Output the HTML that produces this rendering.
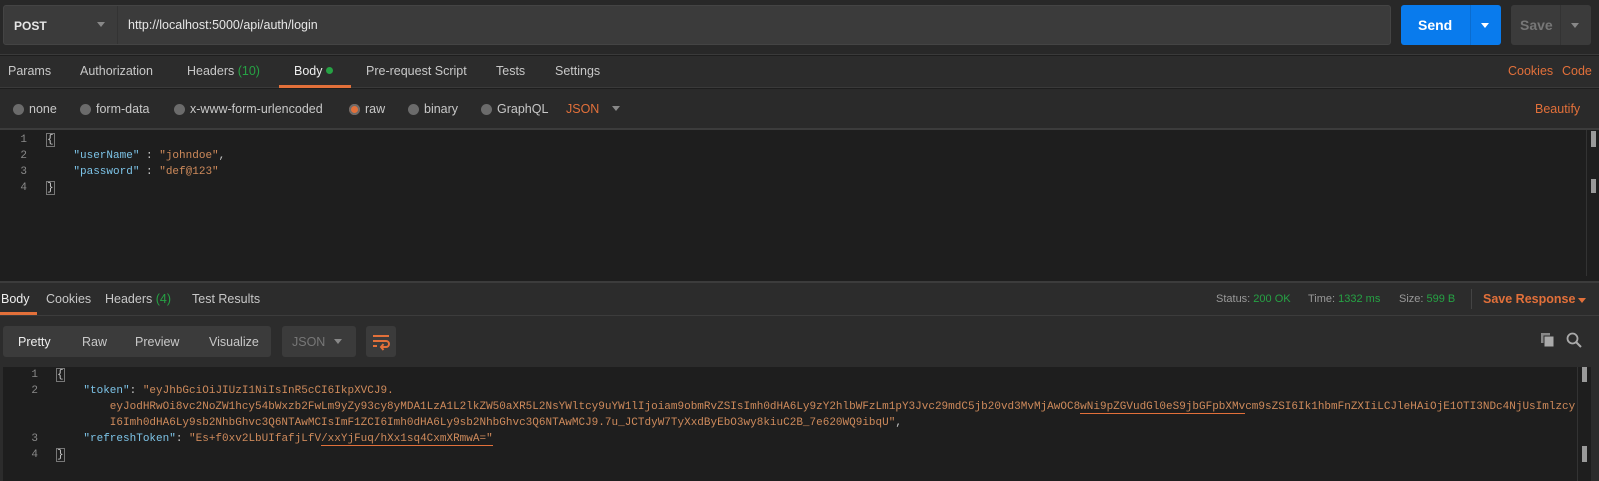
<!DOCTYPE html>
<html><head><meta charset="utf-8"><style>
*{box-sizing:border-box;margin:0;padding:0}
html,body{width:1599px;height:481px}
body{background:#1e1e1e;font-family:"Liberation Sans",sans-serif;font-size:12.5px;color:#c8c8c8;position:relative;overflow:hidden}
.a{position:absolute;white-space:nowrap}
.mono{font-family:"Liberation Mono",monospace;font-size:11px;white-space:nowrap}
.or{color:#e2703a}.gr{color:#26a244}
.dot{display:inline-block;width:11px;height:11px;border-radius:50%;background:#6b6b6b;vertical-align:-2px;margin-right:5px}
.ln{color:#8a8a8a;width:30px;text-align:right}
.k{color:#7dc4e8}.s{color:#ce8a5b}
</style></head><body>
<div class="a" style="left:0;top:0;width:1599px;height:55px;background:#282828;border-bottom:1px solid #3a3a3a"></div>
<div class="a" style="left:3px;top:5px;width:1388px;height:40px;background:#3b3b3b;border-radius:3px;border:1px solid #444"></div>
<div class="a" style="left:117px;top:6px;width:1px;height:38px;background:#333"></div>
<div class="a" style="left:14px;top:19px;font-weight:bold;color:#e6e6e6;font-size:12px">POST</div>
<div class="a" style="left:97px;top:22px;width:0;height:0;border-left:4px solid transparent;border-right:4px solid transparent;border-top:5px solid #888"></div>
<div class="a" style="left:128px;top:18px;color:#e6e6e6;font-size:12.5px">http://localhost:5000/api/auth/login</div>
<div class="a" style="left:1401px;top:5px;width:100px;height:40px;background:#097bed;border-radius:3px"></div>
<div class="a" style="left:1470px;top:5px;width:1px;height:40px;background:#0a6ccf"></div>
<div class="a" style="left:1418px;top:17px;color:#fff;font-weight:bold;font-size:14px">Send</div>
<div class="a" style="left:1481px;top:23px;border-left:4px solid transparent;border-right:4px solid transparent;border-top:5px solid #fff"></div>
<div class="a" style="left:1511px;top:5px;width:80px;height:40px;background:#3b3b3b;border-radius:3px"></div>
<div class="a" style="left:1560px;top:5px;width:1px;height:40px;background:#333"></div>
<div class="a" style="left:1520px;top:17px;color:#777;font-weight:bold;font-size:14px">Save</div>
<div class="a" style="left:1571px;top:23px;border-left:4px solid transparent;border-right:4px solid transparent;border-top:5px solid #888"></div>
<!-- tabs -->
<div class="a" style="left:0;top:56px;width:1599px;height:32px;background:#2c2c2c;border-bottom:1px solid #3a3a3a"></div>
<div class="a" style="top:64px;left:8px">Params</div>
<div class="a" style="top:64px;left:80px">Authorization</div>
<div class="a" style="top:64px;left:187px">Headers <span class="gr">(10)</span></div>
<div class="a" style="top:64px;left:294px;color:#eee">Body <span style="display:inline-block;width:7px;height:7px;border-radius:50%;background:#26a244;vertical-align:1px"></span></div>
<div class="a" style="left:279px;top:85px;width:72px;height:3px;background:#e2703a"></div>
<div class="a" style="top:64px;left:366px">Pre-request Script</div>
<div class="a" style="top:64px;left:496px">Tests</div>
<div class="a" style="top:64px;left:555px">Settings</div>
<div class="a or" style="top:64px;left:1508px">Cookies</div>
<div class="a or" style="top:64px;left:1562px">Code</div>
<!-- radios -->
<div class="a" style="left:0;top:89px;width:1599px;height:41px;background:#2a2a2a;border-bottom:2px solid #3c3c3c"></div>
<div class="a" style="top:102px;left:13px"><span class="dot"></span>none</div>
<div class="a" style="top:102px;left:80px"><span class="dot"></span>form-data</div>
<div class="a" style="top:102px;left:174px"><span class="dot"></span>x-www-form-urlencoded</div>
<div class="a" style="top:102px;left:349px"><span class="dot" style="background:#e2703a;box-shadow:0 0 0 2px #6b6b6b inset"></span>raw</div>
<div class="a" style="top:102px;left:408px"><span class="dot"></span>binary</div>
<div class="a" style="top:102px;left:481px"><span class="dot"></span>GraphQL</div>
<div class="a or" style="top:102px;left:566px">JSON</div>
<div class="a" style="left:612px;top:106px;border-left:4px solid transparent;border-right:4px solid transparent;border-top:5px solid #888"></div>
<div class="a or" style="top:102px;left:1535px">Beautify</div>
<!-- editor 1 -->
<div class="a" style="left:1586px;top:130px;width:1px;height:146px;background:#333"></div>
<div class="a" style="left:1591px;top:131px;width:5px;height:16px;background:#9a9a9a"></div>
<div class="a" style="left:1591px;top:179px;width:5px;height:14px;background:#9a9a9a"></div>
<div class="a mono ln" style="left:-3px;top:132px;line-height:16px">1<br>2<br>3<br>4</div>
<div class="a mono" style="left:47px;top:132px;line-height:16px"><span style="outline:1px solid #777;color:#ccc">{</span><br>&nbsp;&nbsp;&nbsp;&nbsp;<span class="k">"userName"</span> : <span class="s">"johndoe"</span>,<br>&nbsp;&nbsp;&nbsp;&nbsp;<span class="k">"password"</span> : <span class="s">"def@123"</span><br><span style="outline:1px solid #777;color:#ccc">}</span></div>
<!-- response tabs -->
<div class="a" style="left:0;top:281px;width:1599px;height:200px;background:#2c2c2c;border-top:2px solid #3c3c3c"></div>
<div class="a" style="left:0;top:315px;width:1599px;height:1px;background:#3c3c3c"></div>
<div class="a" style="top:292px;left:1px;color:#eee">Body</div>
<div class="a" style="left:0;top:312px;width:37px;height:3px;background:#e2703a"></div>
<div class="a" style="top:292px;left:46px">Cookies</div>
<div class="a" style="top:292px;left:105px">Headers <span class="gr">(4)</span></div>
<div class="a" style="top:292px;left:192px">Test Results</div>
<div class="a" style="top:293px;left:1216px;font-size:11px;color:#999">Status: <span class="gr">200 OK</span></div>
<div class="a" style="top:293px;left:1308px;font-size:11px;color:#999">Time: <span class="gr">1332 ms</span></div>
<div class="a" style="top:293px;left:1399px;font-size:11px;color:#999">Size: <span class="gr">599 B</span></div>
<div class="a" style="left:1471px;top:289px;width:1px;height:20px;background:#444"></div>
<div class="a or" style="top:292px;left:1483px;font-size:12.5px;font-weight:bold">Save Response</div>
<div class="a" style="left:1578px;top:298px;border-left:4px solid transparent;border-right:4px solid transparent;border-top:5px solid #e2703a"></div>
<!-- toolbar -->
<div class="a" style="left:3px;top:326px;width:268px;height:31px;background:#3b3b3b;border-radius:3px"></div>
<div class="a" style="top:335px;left:18px;color:#eee">Pretty</div>
<div class="a" style="top:335px;left:82px">Raw</div>
<div class="a" style="top:335px;left:135px">Preview</div>
<div class="a" style="top:335px;left:209px">Visualize</div>
<div class="a" style="left:282px;top:326px;width:74px;height:31px;background:#3b3b3b;border-radius:3px"></div>
<div class="a" style="top:335px;left:292px;color:#777">JSON</div>
<div class="a" style="left:334px;top:339px;border-left:4px solid transparent;border-right:4px solid transparent;border-top:5px solid #888"></div>
<div class="a" style="left:366px;top:326px;width:30px;height:31px;background:#3b3b3b;border-radius:3px"></div>
<svg class="a" style="left:371px;top:331px" width="20" height="20" viewBox="0 0 20 20"><path d="M2 5h16M2 10h13a3 3 0 0 1 0 6h-5M2 15h4M12.5 13l-2.5 3 2.5 3" stroke="#e2703a" stroke-width="2" fill="none"/></svg>
<svg class="a" style="left:1540px;top:332px" width="16" height="16" viewBox="0 0 16 16"><rect x="1" y="1" width="9" height="10" fill="#888"/><rect x="4" y="4" width="10" height="11" fill="#aaa" stroke="#2c2c2c"/></svg>
<svg class="a" style="left:1566px;top:332px" width="16" height="16" viewBox="0 0 16 16"><circle cx="6.5" cy="6.5" r="5" stroke="#aaa" stroke-width="1.8" fill="none"/><path d="M10 10l5 5" stroke="#aaa" stroke-width="2"/></svg>
<!-- response editor -->
<div class="a" style="left:3px;top:367px;width:1588px;height:114px;background:#1e1e1e"></div>
<div class="a" style="left:1577px;top:367px;width:1px;height:114px;background:#333"></div>
<div class="a" style="left:1582px;top:367px;width:5px;height:15px;background:#9a9a9a"></div>
<div class="a" style="left:1582px;top:446px;width:5px;height:16px;background:#9a9a9a"></div>
<div class="a mono ln" style="left:8px;top:367px;line-height:16px">1<br>2<br><br><br>3<br>4</div>
<div class="a mono" style="left:57px;top:367px;line-height:16px"><span style="outline:1px solid #777;color:#ccc">{</span><br>&nbsp;&nbsp;&nbsp;&nbsp;<span class="k">"token"</span>: <span class="s">"eyJhbGciOiJIUzI1NiIsInR5cCI6IkpXVCJ9.</span><br><span class="s">&nbsp;&nbsp;&nbsp;&nbsp;&nbsp;&nbsp;&nbsp;&nbsp;eyJodHRwOi8vc2NoZW1hcy54bWxzb2FwLm9yZy93cy8yMDA1LzA1L2lkZW50aXR5L2NsYWltcy9uYW1lIjoiam9obmRvZSIsImh0dHA6Ly9zY2hlbWFzLm1pY3Jvc29mdC5jb20vd3MvMjAwOC8<span style="border-bottom:1px solid #e2703a">wNi9pZGVudGl0eS9jbGFpbXMv</span>cm9sZSI6Ik1hbmFnZXIiLCJleHAiOjE1OTI3NDc4NjUsImlzcy</span><br><span class="s">&nbsp;&nbsp;&nbsp;&nbsp;&nbsp;&nbsp;&nbsp;&nbsp;I6Imh0dHA6Ly9sb2NhbGhvc3Q6NTAwMCIsImF1ZCI6Imh0dHA6Ly9sb2NhbGhvc3Q6NTAwMCJ9.7u_JCTdyW7TyXxdByEbO3wy8kiuC2B_7e620WQ9ibqU"</span>,<br>&nbsp;&nbsp;&nbsp;&nbsp;<span class="k">"refreshToken"</span>: <span class="s">"Es+f0xv2LbUIfafjLfV<span style="border-bottom:1px solid #e2703a">/xxYjFuq/hXx1sq4CxmXRmwA="</span></span><br><span style="outline:1px solid #777;color:#ccc">}</span></div>
</body></html>
